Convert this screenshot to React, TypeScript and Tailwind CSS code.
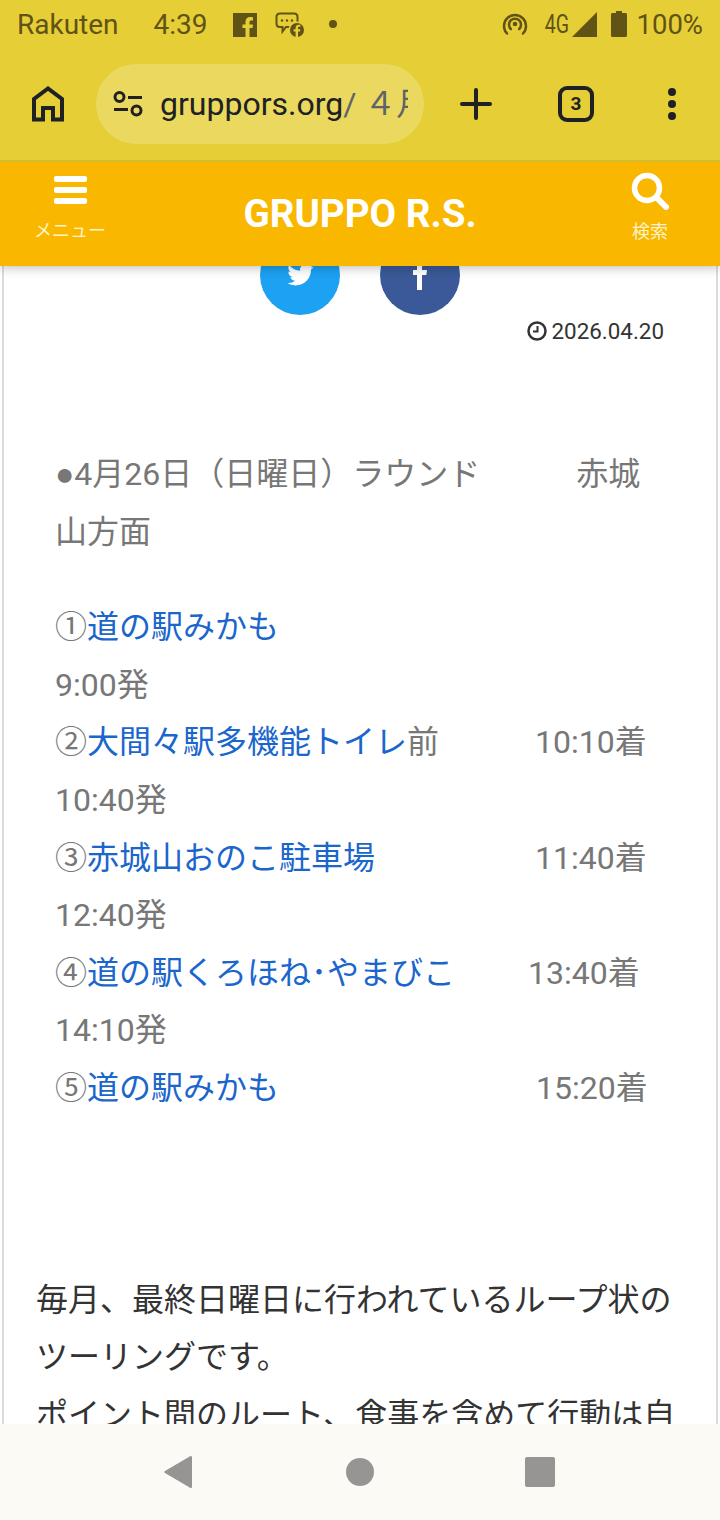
import React from "react";

const cjk = "font-['Roboto','Noto_Sans_CJK_JP',sans-serif]";

function Row({ circled, name, time, tail, pad }: { circled: string; name: string; time?: string; tail?: string; pad?: string }) {
  return (
    <div className="flex h-[57.6px] items-center whitespace-pre">
      <span>{circled}</span>
      <span className="text-[#1a66cc]">{name}</span>
      {tail ? <span>{tail}</span> : null}
      {time ? <span className={pad}>{time}</span> : null}
    </div>
  );
}

export default function App() {
  return (
    <div className={`flex h-[1520px] w-[720px] flex-col overflow-hidden bg-white ${cjk}`}>
      <div className="z-20 shrink-0 bg-[#e5ce36]">
        <div className="flex h-[48px] items-center pl-[17px] pr-[17px] pt-[2px] text-[#615216]">
          <span className="text-[28px]">Rakuten</span>
          <span className="ml-[35px] text-[28px]">4:39</span>
          <svg className="ml-[25px] -mt-[1px]" width="24" height="24" viewBox="0 0 24 24">
            <rect width="24" height="24" fill="#615216" />
            <path d="M16.5 24v-9h3l.5-3.6h-3.5V9.3c0-1 .4-1.8 1.9-1.8H20V4.2c-.4 0-1.500-.2-2.800-.2-2.800 0-4.700 1.700-4.700 4.800v2.600H9.500V15h3v9z" fill="#e5ce36" />
          </svg>
          <svg className="ml-[18px] -mt-[1px]" width="30" height="26" viewBox="0 0 30 26">
            <path d="M5 1.500h14c2 0 3.500 1.500 3.500 3.500v6.500c0 2-1.500 3.500-3.500 3.500H11l-3.500 4.500V15H5c-2 0-3.500-1.500-3.500-3.500V5C1.500 3 3 1.500 5 1.500z" fill="none" stroke="#615216" stroke-width="2" />
            <circle cx="7" cy="8.500" r="1.200" fill="#615216" />
            <circle cx="12" cy="8.500" r="1.200" fill="#615216" />
            <circle cx="17" cy="8.500" r="1.200" fill="#615216" />
            <circle cx="22" cy="18" r="8.500" fill="#e5ce36" />
            <circle cx="22" cy="18" r="7" fill="#615216" />
            <path d="M23 25v-5.500h2l.3-2.300H23v-1.300c0-.7.300-1.100 1.200-1.100h1.200v-2c-.3 0-1-.1-1.800-.1-1.800 0-3 1.100-3 3.100v1.400h-2v2.300h2V25z" fill="#e5ce36" />
          </svg>
          <span className="ml-[24px] -mt-[2px] h-[8px] w-[8px] rounded-full bg-[#615216]" />
          <span className="flex-1" />
          <svg className="-mt-[2px]" width="26" height="24" viewBox="0 0 26 24" fill="none" stroke="#615216" stroke-width="2.500" stroke-linecap="round">
            <path d="M5 21.500a11 11 0 1 1 16 0" />
            <path d="M8.800 17a6 6 0 1 1 8.400 0" />
            <circle cx="13" cy="12" r="2.300" fill="#615216" stroke="none" />
          </svg>
          <span className="ml-[14px] w-[26px] text-center font-['Roboto',sans-serif] text-[25px] whitespace-nowrap [transform:scaleX(0.78)]">4G</span>
          <svg className="ml-[4px] -mt-[2px]" width="25" height="25" viewBox="0 0 25 25"><path d="M0 25L25 0v25z" fill="#615216" /></svg>
          <svg className="ml-[14px] -mt-[2px]" width="16" height="26" viewBox="0 0 16 26"><path d="M5 0h6v2h3.500c.8 0 1.500.7 1.500 1.500V24.500c0 .8-.7 1.500-1.500 1.500h-13C.7 26 0 25.300 0 24.500V3.500C0 2.700.7 2 1.500 2H5z" fill="#615216" /></svg>
          <span className="ml-[9px] text-[27.5px]">100%</span>
        </div>
        <div className="flex h-[112px] items-start">
          <div className="flex h-[112px] w-[96px] items-center justify-center">
            <svg width="32" height="36" viewBox="0 0 32 36" fill="none" stroke="#202124" stroke-width="4">
              <path d="M2 33.500V13L16 2.500 30 13v20.500H21V22H11v11.500z" />
            </svg>
          </div>
          <div className="mt-[16px] flex h-[80px] w-[328px] items-center overflow-hidden rounded-[40px] bg-[#ead95e] pl-[17px]">
            <svg className="shrink-0" width="30" height="26" viewBox="0 0 30 26" fill="none" stroke="#202124" stroke-width="3">
              <circle cx="6.500" cy="6" r="4.500" />
              <circle cx="23.500" cy="19.500" r="4.500" />
              <path d="M15 6.500h14M1 18.500h14" />
            </svg>
            <div className="ml-[17px] flex w-[248px] overflow-hidden whitespace-nowrap text-[32px]">
              <span className="text-[#202124]">gruppors.org</span>
              <span className="text-[#5f6368]">/ ４月</span>
            </div>
          </div>
          <div className="flex h-[112px] w-[296px] items-center">
            <svg className="ml-[36px]" width="32" height="32" viewBox="0 0 32 32" stroke="#202124" stroke-width="4" stroke-linecap="round">
              <path d="M16 2v28M2 16h28" />
            </svg>
            <div className="ml-[66px] flex h-[36px] w-[36px] items-center justify-center rounded-[9px] border-[4px] border-[#202124] text-[19px] font-bold text-[#202124]">3</div>
            <div className="ml-[74px] flex flex-col gap-[4px]">
              <span className="h-[8px] w-[8px] rounded-full bg-[#202124]" />
              <span className="h-[8px] w-[8px] rounded-full bg-[#202124]" />
              <span className="h-[8px] w-[8px] rounded-full bg-[#202124]" />
            </div>
          </div>
        </div>
      </div>

      <div className="relative z-10 flex h-[106px] shrink-0 items-start justify-between border-t-[2px] border-[#d3bd2e] bg-[#f9b700] shadow-[0_2px_10px_rgba(0,0,0,0.25)]">
        <div className="flex w-[140px] flex-col items-center pt-[14px]">
          <div className="flex w-[33px] flex-col gap-[5px]">
            <span className="h-[6px] rounded-[2px] bg-white" />
            <span className="h-[6px] rounded-[2px] bg-white" />
            <span className="h-[6px] rounded-[2px] bg-white" />
          </div>
          <span className="mt-[15px] text-[18px] leading-[24px] text-[#fff3c9]">メニュー</span>
        </div>
        <span className="mt-[28px] text-[38.6px] font-bold leading-[48px] text-white">GRUPPO R.S.</span>
        <div className="flex w-[140px] flex-col items-center pt-[10px]">
          <svg width="38" height="38" viewBox="0 0 38 38" fill="none" stroke="#fff" stroke-width="5.500" stroke-linecap="round">
            <circle cx="16" cy="16" r="12.500" />
            <path d="M26 26l9 9" stroke-width="6" />
          </svg>
          <span className="mt-[10px] text-[18px] leading-[24px] text-[#fff3c9]">検索</span>
        </div>
      </div>

      <div className="-mt-[31px] min-h-0 flex-1 overflow-hidden">
        <div className="mx-[2px] h-full border-x-[2px] border-[#dddcd6] bg-white">
          <div className="flex justify-center gap-[40px]">
            <div className="flex h-[80px] w-[80px] items-center justify-center rounded-full bg-[#1da1f2]">
              <svg width="27" height="22" viewBox="0 0 24 20" fill="#fff">
                <path d="M24 2.400a10 10 0 0 1-2.800.8A5 5 0 0 0 23.300.5a10 10 0 0 1-3.100 1.200 4.900 4.900 0 0 0-8.400 4.500A14 14 0 0 1 1.700.9a4.900 4.900 0 0 0 1.500 6.600 4.900 4.900 0 0 1-2.200-.6 4.900 4.900 0 0 0 3.900 4.900 5 5 0 0 1-2.200.1 4.900 4.900 0 0 0 4.600 3.400A9.900 9.900 0 0 1 0 17.300 14 14 0 0 0 7.500 19.500c9.100 0 14.300-7.700 14-14.600A10 10 0 0 0 24 2.400z" />
              </svg>
            </div>
            <div className="flex h-[80px] w-[80px] items-center justify-center rounded-full bg-[#3b5998]">
              <svg width="14" height="30" viewBox="0 0 14 30" fill="#fff">
                <path d="M4 30V15H0v-5h4V6.500C4 2.500 6.500 0 10 0h4v5h-2.500C10 5 9 5.800 9 7.500V10h5l-.7 5H9v15z" />
              </svg>
            </div>
          </div>
          <div className="mt-[4px] flex items-center justify-end gap-[5px] pr-[52px] text-[22.4px] leading-[24px] text-[#333]">
            <svg width="20" height="20" viewBox="0 0 20 20" fill="none" stroke="#333" stroke-width="2.500">
              <circle cx="10" cy="10" r="8.500" />
              <path d="M10.500 5v5.500H6" stroke-width="2" />
            </svg>
            <span>2026.04.20</span>
          </div>

          <div className="px-[32px] text-[32px] leading-[57.6px] text-[#333]">
            <div className="mt-[103px] px-[19px] text-[#777]">
              <div className="whitespace-nowrap"><span className="font-['Liberation_Sans',sans-serif]">●</span>4月26日（日曜日）ラウンド　　　赤城</div>
              <div>山方面</div>
              <div className="mt-[38px]">
                <Row circled="①" name="道の駅みかも" />
                <Row circled="" name="" time="9:00発" />
                <Row circled="②" name="大間々駅多機能トイレ" tail="前" time="10:10着" pad="ml-[96px]" />
                <Row circled="" name="" time="10:40発" />
                <Row circled="③" name="赤城山おのこ駐車場" time="11:40着" pad="ml-[160px]" />
                <Row circled="" name="" time="12:40発" />
                <Row circled="④" name="道の駅くろほね･やまびこ" time="13:40着" pad="ml-[73px]" />
                <Row circled="" name="" time="14:10発" />
                <Row circled="⑤" name="道の駅みかも" time="15:20着" pad="ml-[257px]" />
              </div>
            </div>
            <div className="mt-[154px]">毎月、最終日曜日に行われているループ状の</div>
            <div>ツーリングです。</div>
            <div>ポイント間のルート、食事を含めて行動は自</div>
          </div>
        </div>
      </div>

      <div className="z-20 flex h-[96px] shrink-0 items-start bg-[#fbfaf5] pl-[164px] pt-[32px]">
        <svg width="28" height="32" viewBox="0 0 28 32"><path d="M26.500 0c1 0 1.500.5 1.500 1.500v29c0 1-.5 1.500-1.500 1.500L1 17c-1-.6-1-1.400 0-2z" fill="#969594" /></svg>
        <span className="ml-[154px] mt-[2px] h-[28px] w-[28px] rounded-full bg-[#969594]" />
        <span className="ml-[151px] mt-[1px] h-[30px] w-[30px] rounded-[2px] bg-[#969594]" />
      </div>
    </div>
  );
}
